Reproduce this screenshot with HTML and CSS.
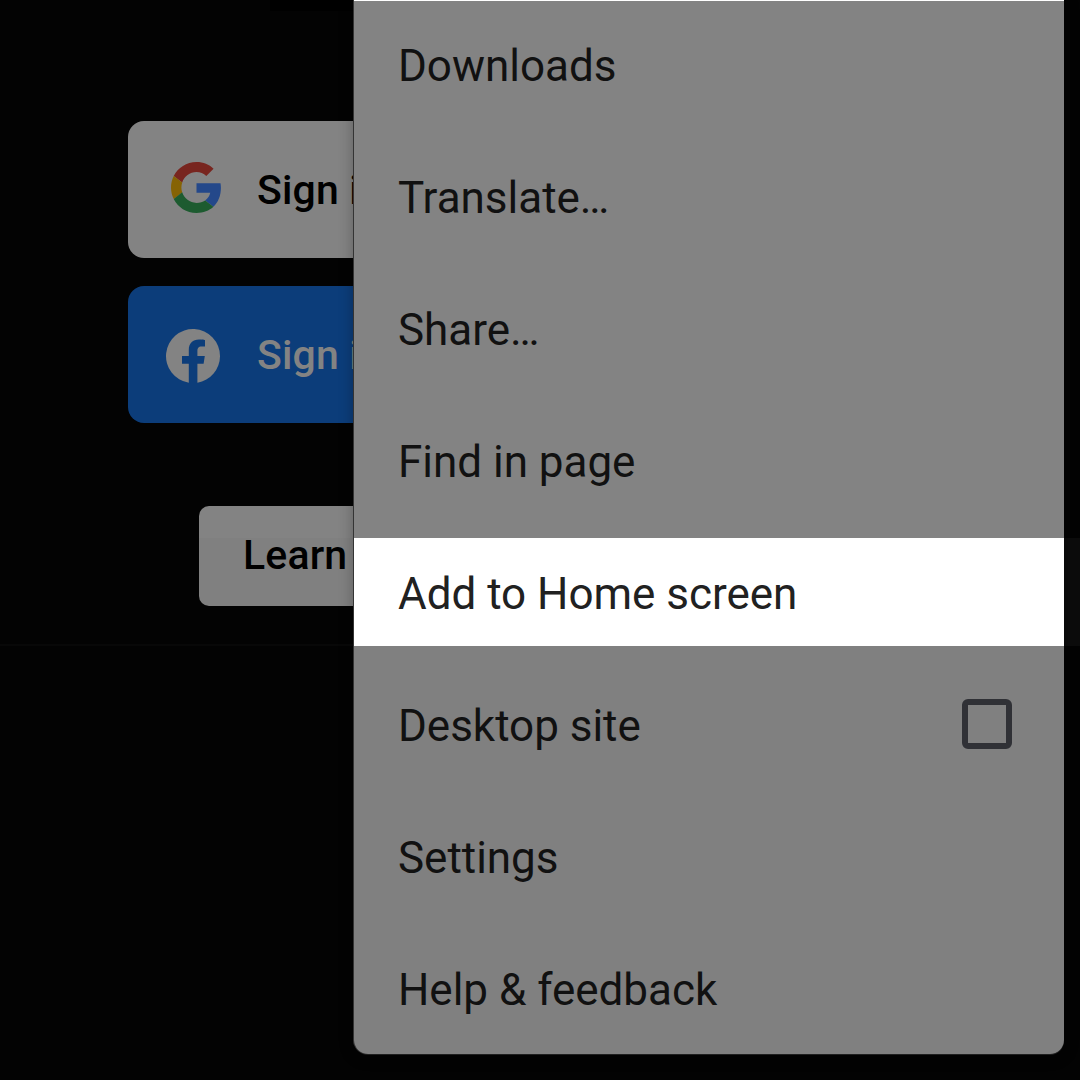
FILE: index.html
```
<!DOCTYPE html>
<html lang="en">
<head>
<meta charset="utf-8">
<title>Browser menu</title>
<link rel="stylesheet" href="styles.css">
</head>
<body>
<main class="page">
  <div class="page-header"></div>
  <button class="sign-in google">
    <svg class="google-logo" viewBox="0 0 48 48">
      <path fill="#78251f" d="M24 9.5c3.54 0 6.71 1.22 9.21 3.6l6.85-6.85C35.9 2.38 30.47 0 24 0 14.62 0 6.51 5.38 2.56 13.22l7.98 6.19C12.43 13.72 17.74 9.5 24 9.5z"/>
      <path fill="#24488a" d="M46.98 24.55c0-1.57-.15-3.09-.38-4.55H24v9.02h12.94c-.58 2.96-2.26 5.48-4.78 7.18l7.73 6c4.51-4.18 7.09-10.36 7.09-17.65z"/>
      <path fill="#866304" d="M10.53 28.59c-.48-1.45-.76-2.99-.76-4.59s.27-3.14.76-4.59l-7.98-6.19C.92 16.46 0 20.12 0 24s.92 7.54 2.56 10.78l7.97-6.19z"/>
      <path fill="#1d5b30" d="M24 48c6.48 0 11.93-2.13 15.89-5.81l-7.73-6c-2.15 1.45-4.92 2.3-8.16 2.3-6.26 0-11.57-4.22-13.47-9.91l-7.98 6.19C6.51 42.62 14.62 48 24 48z"/>
    </svg>
    <span class="sign-in-label">Sign in</span>
  </button>
  <button class="sign-in facebook">
    <svg class="facebook-logo" viewBox="0 0 54 54">
      <path fill="#838383" d="M54 27A27 27 0 1 0 22.8 53.7V34.8H16V27h6.8v-6c0-6.8 4-10.5 10.2-10.5 3 0 6 .5 6 .5v6.6h-3.4c-3.3 0-4.2 2-4.2 4.2V27h7.4l-1.2 7.8h-6.2v18.9A27 27 0 0 0 54 27z"/>
    </svg>
    <span class="sign-in-label">Sign in</span>
  </button>
  <button class="learn">Learn more</button>
  <div class="section-line"></div>
</main>
<div class="edge-band"></div>
<nav class="menu">
  <div class="menu-item"><span>Downloads</span></div>
  <div class="menu-item"><span>Translate…</span></div>
  <div class="menu-item"><span>Share…</span></div>
  <div class="menu-item"><span>Find in page</span></div>
  <div class="menu-item highlighted"><span>Add to Home screen</span></div>
  <div class="menu-item"><span>Desktop site</span><span class="checkbox"></span></div>
  <div class="menu-item"><span>Settings</span></div>
  <div class="menu-item"><span>Help &amp; feedback</span></div>
</nav>
</body>
</html>
```
FILE: styles.css
```
* { box-sizing: border-box; }

body {
  margin: 0;
  width: 1080px;
  height: 1080px;
  position: relative;
  overflow: hidden;
  background: #030303;
  font-family: Roboto, "Liberation Sans", sans-serif;
}

.page {
  display: flex;
  flex-direction: column;
  align-items: flex-start;
}

.page-header {
  width: 84px;
  height: 11px;
  margin: 0 0 110px 270px;
  background: #000;
}

.sign-in {
  display: flex;
  align-items: center;
  width: 824px;
  height: 137px;
  margin: 0 0 28px 128px;
  padding: 0 0 0 38px;
  border: 0;
  border-radius: 16px;
  font: 500 41px/48px Roboto, "Liberation Sans", sans-serif;
  letter-spacing: .15px;
  white-space: nowrap;
}

.google { background: #838383; color: #000; }
.facebook { background: #0c3d7a; color: #838383; }

.google-logo {
  width: 51px;
  height: 51px;
  margin: 0 35px 4px 5px;
}

.facebook-logo {
  width: 54px;
  height: 54px;
  margin: 3px 37px 0 0;
}

.learn {
  width: 682px;
  height: 100px;
  margin: 55px 0 38px 199px;
  padding: 0 0 2px 44px;
  border: 0;
  border-radius: 10px;
  background: linear-gradient(#838383 32px, #808080 32px);
  color: #000;
  font: 500 41px/48px Roboto, "Liberation Sans", sans-serif;
  letter-spacing: .15px;
  text-align: left;
}

.section-line {
  width: 354px;
  height: 2px;
  background: #080808;
}

.edge-band {
  position: absolute;
  left: 1064px;
  top: 538px;
  width: 16px;
  height: 108px;
  background: #0c0c0c;
}

.menu {
  position: absolute;
  left: 354px;
  top: 0;
  width: 710px;
  height: 1054px;
  border-top: 1px solid #fff;
  border-radius: 0 0 14px 14px;
  background: linear-gradient(#838383 537px, #808080 537px);
  box-shadow: -1px 0 0 #343434, 0 1px 0 #202020, 0 2px 15px rgba(0, 0, 0, .3);
  color: #111;
  font-size: 44px;
  line-height: 52px;
}

.menu-item {
  display: flex;
  align-items: center;
  justify-content: space-between;
  height: 132px;
  padding: 0 52px 2px 44px;
  letter-spacing: -.02px;
  white-space: nowrap;
}

.menu-item.highlighted {
  height: 108px;
  margin: 9px 0 15px;
  padding: 4px 52px 0 44px;
  background: #fff;
  color: #212121;
}

.checkbox {
  width: 50px;
  height: 50px;
  margin-bottom: 5px;
  border: 6px solid #303136;
  border-radius: 6px;
}
```
